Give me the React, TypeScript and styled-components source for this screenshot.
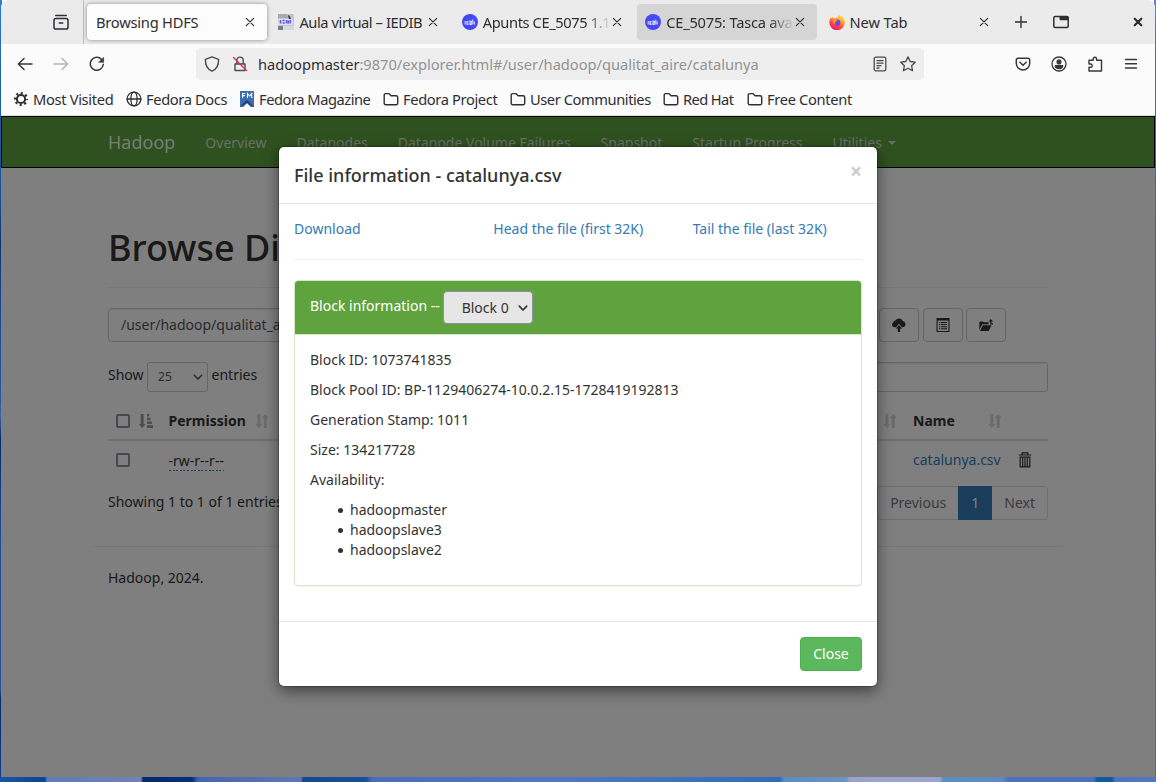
import React from 'react';
import styled, { createGlobalStyle, css } from 'styled-components';

const GlobalStyle = createGlobalStyle`
  * { box-sizing: border-box; }
  html, body { margin: 0; padding: 0; }
  body { overflow: hidden; font-family: 'Noto Sans', 'Open Sans', sans-serif; }
  p, h1, h4, ul { margin: 0; }
  svg { display: block; flex: none; }
`;

const Desktop = styled.div`
  width: 1156px;
  height: 782px;
  padding: 0 1px 5px;
  background:
    linear-gradient(90deg, #1b53a4 0, #0b4595 45px, #5f7cb4 47px, #6f83b6 141px, #02296d 143px, #052f7c 192px,
      #4465ae 198px, #6077b5 301px, #16488f 303px, #17509a 366px, #4d6cba 372px, #5277c0 560px, #2f6db8 780px,
      #5b8cc0 784px, #6d93c3 846px, #9aa3cb 850px, #9aa5cd 940px, #5a8fc0 943px, #6088c4 1003px, #4c72bd 1008px,
      #4c70bb 1094px, #125a9e 1097px, #125a9e 1112px, #4f74bb 1115px, #5577bd 1156px) 0 777px / 1156px 5px no-repeat,
    linear-gradient(180deg, #2d7bd0 0, #1d5fae 90px, #17519c 200px, #0a3573 240px, #1a4f9c 330px, #2457a6 400px,
      #4361a8 415px, #03296e 440px, #1b4d96 530px, #2552a0 690px, #03296e 700px, #0b3f8b 777px) 0 0 / 2px 777px no-repeat,
    linear-gradient(180deg, #5d83dc 0, #4d66a8 60px, #4a5f9e 300px, #2f4f98 530px, #4c64a5 600px, #4c64a5 777px) 1154px 0 / 2px 777px no-repeat;
`;

const Window = styled.div`
  width: 1154px;
  height: 777px;
  display: flex;
  flex-direction: column;
  overflow: hidden;
  border-radius: 8px 8px 0 0;
  background: #fbfbfb;
`;

/* ---------- browser chrome ---------- */

const TabBar = styled.div`
  display: flex;
  height: 44px;
  background: #ebebeb;
  color: #2e2e33;
`;

const RecentTabs = styled.div`
  width: 83px;
  padding: 14px 0 0 52px;
  border-right: 1px solid #bebebe;
`;

const TabStrip = styled.div`
  display: flex;
  gap: 3.4px;
  padding: 4px 0 4px 3px;
`;

const TabItem = styled.div<{ $state?: 'active' | 'hover' }>`
  width: 180px;
  height: 36px;
  display: flex;
  align-items: center;
  padding: 0 12px 0 9px;
  border-radius: 4px;
  ${(p) => p.$state === 'active' && css`background: #fcfcfc; box-shadow: 0 0 4px rgba(0, 0, 0, 0.42);`}
  ${(p) => p.$state === 'hover' && css`background: #d5d5d5;`}
`;

const TabLabel = styled.span<{ $fade?: boolean; $track: number }>`
  flex: 1;
  min-width: 0;
  overflow: hidden;
  white-space: nowrap;
  font-size: 14.67px;
  line-height: 22px;
  letter-spacing: ${(p) => p.$track}px;
  ${(p) => p.$fade && css`mask-image: linear-gradient(90deg, #000 calc(100% - 26px), transparent calc(100% - 1px));`}
`;

const Favicon = styled.span`
  margin-left: -1px;
  margin-right: 5px;
`;

const TabTools = styled.div`
  flex: 1;
  display: flex;
  align-items: center;
  padding: 0 12px 0 12px;
`;

const ToolGap = styled.span<{ $w?: number }>`
  ${(p) => (p.$w ? `width: ${p.$w}px;` : 'flex: 1;')}
`;

const NavToolbar = styled.div`
  display: flex;
  align-items: center;
  height: 40px;
  padding: 0 16px;
  color: #38383d;
`;

const NavButtons = styled.div`
  display: flex;
  gap: 20px;
  width: 179px;
`;

const UrlBar = styled.div`
  width: 728px;
  height: 32px;
  display: flex;
  align-items: center;
  gap: 12px;
  padding: 0 8px;
  border-radius: 4px;
  background: #eeeeee;
  color: #4a4a4f;
`;

const UrlText = styled.span`
  flex: 1;
  margin-left: -2px;
  font-size: 14.67px;
  letter-spacing: -0.015px;
  color: #939395;
  white-space: nowrap;
  b { font-weight: 400; color: #2e2e33; }
`;

const ToolbarEnd = styled.div`
  display: flex;
  flex: 1;
  justify-content: flex-end;
  gap: 20px;
`;

const BookmarkBar = styled.div`
  display: flex;
  height: 32px;
  padding: 0 0 1px 12px;
  border-bottom: 1px solid #dcdcdc;
  color: #2e2e33;
`;

const Bookmark = styled.div<{ $w: number; $track: number }>`
  display: flex;
  align-items: center;
  gap: 4px;
  width: ${(p) => p.$w}px;
  font-size: 14.67px;
  line-height: 20px;
  letter-spacing: ${(p) => p.$track}px;
  white-space: nowrap;
`;

/* ---------- page ---------- */

const Viewport = styled.div`
  position: relative;
  flex: 1;
  overflow: hidden;
  background: #fff;
  color: #333;
  font-size: 14px;
  line-height: 20px;
`;

const NavBar = styled.nav`
  height: 52px;
  padding: 0 91px;
  display: flex;
  border: 1px solid #000;
  background: #5fa33e;
`;

const Brand = styled.a`
  padding: 15px;
  font-size: 18px;
  color: #fff;
  opacity: 0.9;
`;

const NavLink = styled.a`
  display: flex;
  align-items: center;
  gap: 6px;
  height: 50px;
  padding: 2px 15px 0;
  color: #d2dccd;
  white-space: nowrap;
`;

const Caret = styled.i`
  border: 4px solid transparent;
  border-top-color: currentColor;
  border-bottom: 0;
`;

const Container = styled.main`
  width: 970px;
  margin: 0 auto;
  padding: 60px 15px 0;
`;

const PageTitle = styled.h1`
  padding-bottom: 19px;
  margin-bottom: 20px;
  border-bottom: 1px solid #eee;
  font-size: 36px;
  line-height: 40px;
  font-weight: 500;
`;

const PathRow = styled.div`
  display: flex;
  gap: 3.5px;
  padding-right: 42px;
`;

const Field = styled.div<{ $h: number; $w?: number }>`
  ${(p) => (p.$w ? `width: ${p.$w}px;` : 'flex: 1;')}
  height: ${(p) => p.$h}px;
  display: flex;
  align-items: center;
  padding: 0 12px;
  border: 1px solid #ccc;
  border-radius: ${(p) => (p.$h > 30 ? 4 : 3)}px;
  box-shadow: inset 0 1px 1px rgba(0, 0, 0, 0.075);
  color: #555;
`;

const IconButton = styled.button`
  width: 40px;
  height: 34px;
  padding: 0 12px;
  border: 1px solid #ccc;
  border-radius: 4px;
  background: #fff;
  color: #333;
`;

const LengthRow = styled.div`
  display: flex;
  align-items: flex-start;
  gap: 3.5px;
  margin-top: 20px;
  line-height: 26px;
`;

const LengthSelect = styled.div`
  width: 61px;
  height: 30px;
  display: flex;
  align-items: center;
  justify-content: space-between;
  padding: 0 4px 0 10px;
  border: 1px solid #ccc;
  border-radius: 3px;
  font-size: 12px;
  color: #555;
`;

const tableGrid = css`
  display: grid;
  grid-template-columns: 52.5px 116.5px 1fr 105px 38px;
`;

const HeadRow = styled.div`
  ${tableGrid}
  height: 43px;
  margin-top: 6px;
  border-bottom: 2px solid #ddd;
  font-weight: 700;
`;

const BodyRow = styled.div`
  ${tableGrid}
  height: 37px;
`;

const Cell = styled.div<{ $between?: boolean }>`
  display: flex;
  align-items: center;
  justify-content: ${(p) => (p.$between ? 'space-between' : 'flex-start')};
  padding: ${(p) => (p.$between ? '5px 8px 0' : '1px 8px 0')};
  a { color: #337ab7; }
`;

const CheckBox = styled.span`
  width: 14px;
  height: 14px;
  border: 2px solid #8f8f9d;
  border-radius: 2px;
`;

const Perm = styled.span`
  padding-bottom: 1px;
  margin-bottom: -1px;
  line-height: 19px;
  background: repeating-linear-gradient(90deg, #2a86b0 0 2px, transparent 2px 3.6px) 0 100% / 100% 1px no-repeat;
`;

const TableFoot = styled.div`
  display: flex;
  justify-content: space-between;
  align-items: flex-start;
  margin-top: 8px;
  padding-top: 0;
  line-height: 32px;
`;

const Pager = styled.div`
  display: flex;
  height: 34px;
  border: 1px solid #ddd;
  border-radius: 4px;
  line-height: 20px;
  color: #777;
`;

const PageItem = styled.span<{ $on?: boolean }>`
  padding: 6px 12px;
  ${(p) => p.$on && css`margin: -1px 0; padding: 7px 13px; background: #337ab7; color: #fff;`}
`;

const PageFooter = styled.footer`
  margin: 26px -15px 0;
  padding: 21px 15px;
  border-top: 1px solid #eee;
`;

/* ---------- modal ---------- */

const Backdrop = styled.div`
  position: absolute;
  inset: 0;
  background: rgba(0, 0, 0, 0.5);
  padding-top: 31px;
`;

const Modal = styled.section`
  width: 598px;
  margin: 0 auto;
  border-radius: 5px;
  background: #fff;
  box-shadow: 0 0 0 1px rgba(0, 0, 0, 0.2), 0 5px 15px rgba(0, 0, 0, 0.5);
`;

const ModalHead = styled.header`
  display: flex;
  justify-content: space-between;
  height: 57px;
  padding: 15px;
  border-bottom: 1px solid #e5e5e5;
`;

const ModalTitle = styled.h4`
  font-size: 18px;
  line-height: 26px;
  font-weight: 500;
`;

const ModalClose = styled.span`
  font-size: 21px;
  line-height: 18px;
  font-weight: 700;
  color: #ccc;
`;

const ModalBody = styled.div`
  padding: 15px 15px 35px;
`;

const LinkRow = styled.div`
  display: grid;
  grid-template-columns: repeat(3, 199.33px);
  height: 41px;
  margin-bottom: 20px;
  border-bottom: 1px solid #eee;
  color: #337ab7;
`;

const Panel = styled.div`
  border: 1px solid #d6e9c6;
  border-radius: 4px;
  overflow: hidden;
  box-shadow: 0 1px 1px rgba(0, 0, 0, 0.05);
`;

const PanelHead = styled.div`
  display: flex;
  gap: 3.4px;
  height: 54px;
  padding: 10px 15px;
  border-bottom: 1px solid #d6e9c6;
  background: #5fa33e;
  color: #fff;
  line-height: 30px;
`;

const BlockSelect = styled.span`
  display: flex;
  align-items: center;
  justify-content: space-between;
  width: 90px;
  height: 33px;
  padding: 0 4px 0 17.5px;
  border: 1px solid #8f8f9d;
  border-radius: 4px;
  background: #e6e6e6;
  color: #333;
`;

const PanelBody = styled.div`
  padding: 15px;
  p { margin-bottom: 10px; }
`;

const HostList = styled.ul`
  padding-left: 28px;
  margin-bottom: 10px;
  list-style: none;
`;

const Host = styled.li`
  display: flex;
  align-items: center;
  gap: 7px;
  &::before {
    content: '';
    width: 5px;
    height: 5px;
    margin-top: 1px;
    border-radius: 50%;
    background: #333;
  }
`;

const ModalFoot = styled.footer`
  display: flex;
  justify-content: flex-end;
  padding: 15px;
  border-top: 1px solid #e5e5e5;
`;

const CloseButton = styled.button`
  width: 62px;
  height: 34px;
  padding: 0;
  border: 1px solid #4cae4c;
  border-radius: 4px;
  background: #5cb85c;
  color: #fff;
  font: 14px/20px 'Noto Sans', sans-serif;
`;

/* ---------- icons ---------- */

type IconProps = { size?: number; children: React.ReactNode; w?: number; color?: string };
const Icon = ({ size = 16, children, w = 1.4, color = 'currentColor' }: IconProps) => (
  <svg width={size} height={size} viewBox={`0 0 ${size} ${size}`} fill="none" stroke={color} strokeWidth={w} strokeLinecap="round" strokeLinejoin="round">
    {children}
  </svg>
);

const CrossIcon = () => <Icon size={10} w={1.15}><path d="M1.3 1.3l7.4 7.4M8.7 1.3L1.3 8.7" /></Icon>;
const FolderIcon = () => <Icon w={1.4}><path d="M1.2 12.2V4.1a1.5 1.5 0 0 1 1.5-1.5h3.2l2.2 2.1h5a1.6 1.6 0 0 1 1.6 1.6v5.9a1.5 1.5 0 0 1-1.5 1.5H2.7a1.5 1.5 0 0 1-1.5-1.5z" /></Icon>;
const ChevronIcon = ({ w = 1.5 }: { w?: number }) => <Icon size={10} w={w}><path d="M1.3 3.2L5 7l3.7-3.8" /></Icon>;

const CourseIcon = () => (
  <svg width="16" height="16" viewBox="0 0 16 16">
    <circle cx="8" cy="8" r="8" fill="#4548f5" />
    <path d="M3.200 7v3.400M5 7.500h1.500M5 7v3.400h1.500M5 9h1.500M8 7v3.400h1.400V7.400zM10.800 5.600v4.800M12.300 7.600v2.800" stroke="#d9daff" strokeWidth="1.100" fill="none" />
  </svg>
);

const CampusIcon = () => (
  <svg width="16" height="16" viewBox="0 0 16 16">
    <path fill="#c3c7cf" d="M0 0h16v16H0z" />
    <path fill="#a5aab3" d="M0 0h9l2 4H0z" />
    <path fill="#3b3f4b" d="M10 1l2 1 1 3-2 1z" />
    <path fill="#dfe1f3" d="M1 5h13l1 6H0z" />
    <path d="M2.500 6v3.500M4.500 6.500h2.200M4.500 9h2.200M8.500 6v3.500M10.300 6.500v3M12.300 6v3.500" stroke="#5a55e0" strokeWidth="1.500" fill="none" />
    <path fill="#777d89" d="M0 12h5v4H0z" />
    <path fill="#d6d9de" d="M5 12h11v4H5z" />
  </svg>
);

const FirefoxIcon = () => (
  <svg width="16" height="16" viewBox="0 0 16 16">
    <defs>
      <linearGradient id="fox" x1=".8" y1="0" x2=".3" y2="1">
        <stop offset="0" stopColor="#fff14a" />
        <stop offset=".35" stopColor="#ffb02e" />
        <stop offset=".68" stopColor="#ff4a38" />
        <stop offset="1" stopColor="#ec1178" />
      </linearGradient>
    </defs>
    <path fill="url(#fox)" d="M10.3 0c.2 1.5 1 2 1.8 2.8.3.2.5-.2.5-.6 1.900 1.400 3.200 3.700 3.200 6.200A7.700 7.700 0 0 1 .3 8.500C.3 6.500 1 4.700 2.100 3.100c.1.500.2.900.4 1.200.4-.6.9-1 1.500-1.300 0 .5.2 1 .6 1.400C6.800 4.300 9 3.600 10.300 0z" />
    <circle cx="8.100" cy="8.700" r="3.300" fill="#7542e5" />
    <path fill="#ff9640" d="M4.200 6.500c1.300-1 3-.8 4 .3-.2.900-1.700.8-2.300 1.700-.4.900.3 1.900 1.400 2.300-1.800.3-3.700-1.600-3.100-4.300z" />
  </svg>
);

const MagazineIcon = () => (
  <svg width="16" height="16" viewBox="0 0 16 16">
    <path fill="#3c6eb4" d="M1 0h14v16H1z" />
    <path fill="#294172" d="M1 16l5-5.500L8 9l2 1.500 5 5.500-3-1.300L8 11.800l-4 2.900z" />
    <path fill="#fbfbfb" d="M4.200 16L8 12.300l3.800 3.700z" />
    <path d="M3.500 7V2.500H6.200M3.500 4.600H6M8.500 7V2.500L10.600 5l2.100-2.500V7" stroke="#fff" strokeWidth="1.100" fill="none" />
  </svg>
);

const SortIcon = () => (
  <svg width="14" height="14" viewBox="0 0 14 14" fill="#333" opacity=".2">
    <path d="M2.400 0h3v10h2L3.900 14 .4 10h2zM8.700 14V4h-2l3.500-4 3.500 4h-2v10z" />
  </svg>
);

const SortedIcon = () => (
  <svg width="14" height="14" viewBox="0 0 14 14" fill="#333" opacity=".5">
    <path d="M1.700 0h2.900v10h2L3.200 14-.2 10h1.900zM8 0h2.200v2.600H8zM8 3.700h3.400v2.600H8zM8 7.500h4.800v2.600H8zM8 11.300h6v2.600H8z" />
  </svg>
);

const UploadIcon = () => (
  <svg width="14" height="14" viewBox="0 0 14 14" fill="currentColor">
    <path d="M4 9.300H2.400A2.500 2.500 0 0 1 1.300 4.600 2.200 2.200 0 0 1 3.500 2.500 4 4 0 0 1 10.800 3.100 3.200 3.200 0 0 1 11.300 9.300H10L7 5.700z" />
    <path d="M7 6.900l3.200 3.600H8.200V14H5.800v-3.500H3.800z" />
  </svg>
);

const ListIcon = () => (
  <svg width="14" height="14" viewBox="0 0 14 14" fill="currentColor">
    <path fillRule="evenodd" d="M.5 0h13v14H.5zM1.600 2.500V12.900H12.400V2.500z" />
    <path d="M3 4h1.200v1H3zM5 4h6v1H5zM3 6.100h1.200v1H3zM5 6.100h6v1H5zM3 8.200h1.200v1H3zM5 8.200h6v1H5zM3 10.300h1.200v1H3zM5 10.300h6v1H5z" />
  </svg>
);

const FolderUpIcon = () => (
  <svg width="15" height="14" viewBox="0 0 15 14" fill="currentColor">
    <path d="M.3 12V4.500l.8-1H4l.8.8h4.700v1.900H3.300zM3.800 7.200h8.700L9.700 13H1z" />
    <path d="M11.800 1l2.200 2.400h-1.500V5.200H14v1.300h-2.800V3.400H9.700z" />
  </svg>
);

const TrashIcon = () => (
  <svg width="14" height="16" viewBox="0 0 14 16" fill="none" stroke="#333" strokeWidth="1.200">
    <path d="M.7 3h12.600M4.200 2.800V.9h5.600v1.900M2.200 5.200h9.600V14.900H2.200zM4.700 6v8.500M7 6v8.500M9.300 6v8.500" />
  </svg>
);

const tabs: { title: string; track: number; icon?: React.ReactNode; fade?: boolean; state?: 'active' | 'hover' }[] = [
  { title: 'Browsing HDFS', track: -0.22, state: 'active' },
  { title: 'Aula virtual – IEDIB', track: -0.42, icon: <CampusIcon /> },
  { title: 'Apunts CE_5075 1.1', track: -0.4, icon: <CourseIcon />, fade: true },
  { title: 'CE_5075: Tasca ava', track: -0.22, icon: <CourseIcon />, fade: true, state: 'hover' },
  { title: 'New Tab', track: -0.1, icon: <FirefoxIcon /> },
];

const GearIcon = () => (
  <svg width="16" height="16" viewBox="0 0 16 16" fill="none" stroke="currentColor">
    <circle cx="8" cy="8" r="4.100" strokeWidth="2" />
    <circle cx="8" cy="8" r="6" strokeWidth="2.200" strokeDasharray="2.100 2.612" strokeDashoffset="1" />
  </svg>
);

const GlobeIcon = () => <Icon w={1.300}><circle cx="8" cy="8" r="6.900" /><ellipse cx="8" cy="8" rx="3.100" ry="6.900" /><path d="M1.100 8h13.800" /></Icon>;

const folders: [string, number, number][] = [
  ['Fedora Project', 127, -0.36],
  ['User Communities', 153, -0.43],
  ['Red Hat', 84, -0.6],
  ['Free Content', 120, -0.33],
];
const navItems = ['Overview', 'Datanodes', 'Datanode Volume Failures', 'Snapshot', 'Startup Progress'];

export default function App() {
  return (
    <Desktop>
      <GlobalStyle />
      <Window>
        <TabBar>
          <RecentTabs>
            <Icon w={1.5}><rect x="1" y="4.600" width="14" height="10.400" rx="1.800" /><path d="M2.800 1.500h10.400M6.300 9h3.400" /></Icon>
          </RecentTabs>
          <TabStrip>
            {tabs.map((t) => (
              <TabItem key={t.title} $state={t.state}>
                {t.icon && <Favicon>{t.icon}</Favicon>}
                <TabLabel $fade={t.fade} $track={t.track}>{t.title}</TabLabel>
                <CrossIcon />
              </TabItem>
            ))}
          </TabStrip>
          <TabTools>
            <Icon size={16} w={1.400}><path d="M8 2.500v11M2.500 8h11" /></Icon>
            <ToolGap $w={24} />
            <Icon w={1.500}><rect x=".8" y="2.600" width="14.400" height="11" rx="1.500" /><path fill="currentColor" d="M7.300 3h7.500v2.600H7.300z" /></Icon>
            <ToolGap />
            <Icon size={10} w={2.200}><path d="M1.700 1.700l6.600 6.600M8.300 1.700L1.700 8.300" /></Icon>
          </TabTools>
        </TabBar>

        <NavToolbar>
          <NavButtons>
            <Icon w={1.500}><path d="M15 8H1.300M7 2.500L1.300 8 7 13.500" /></Icon>
            <Icon w={1.500} color="#b4b4b6"><path d="M1 8h13.700M9 2.500L14.700 8 9 13.500" /></Icon>
            <Icon w={1.500}><path d="M14.300 8.300A6.500 6.500 0 1 1 12.600 3.400" /><path fill="currentColor" d="M14.600 1.500v4.800H9.800z" strokeWidth=".6" /></Icon>
          </NavButtons>
          <UrlBar>
            <Icon w={1.400}><path d="M8 .9l6.600 2.500c.2 5.600-2.200 9.800-6.600 11.700C3.600 13.200 1.200 9 1.400 3.400z" /></Icon>
            <Icon w={1.400}><path d="M3 8h10v6.500H3zM4.800 8V4.300a3.200 3.200 0 0 1 6.400 0V8" /><path stroke="#e22850" d="M1.500 1.500l13 13" /></Icon>
            <UrlText><b>hadoopmaster</b>:9870/explorer.html#/user/hadoop/qualitat_aire/catalunya</UrlText>
            <Icon w={1.300}><rect x="2.200" y="1.200" width="11.600" height="13.600" rx="1.600" /><path d="M5 4.700h6M5 7.200h6M5 9.700h4M5 12h2" /></Icon>
            <Icon w={1.300}><path d="M8 .9l2.200 4.600 5 .7-3.600 3.500.9 5L8 12.300l-4.500 2.400.9-5L.8 6.200l5-.7z" /></Icon>
          </UrlBar>
          <ToolbarEnd>
            <Icon w={1.500}><path d="M3 2.300h10a1.700 1.700 0 0 1 1.700 1.700v3.300a6.700 6.700 0 0 1-13.400 0V4A1.700 1.700 0 0 1 3 2.300zM4.800 6.300L8 9.300l3.200-3" /></Icon>
            <Icon w={1.300}><circle cx="8" cy="8" r="7" /><circle cx="8" cy="5.900" r="1.900" fill="currentColor" /><path fill="currentColor" d="M4.300 9.700h7.400c0 1.700-1.700 2.800-3.700 2.800s-3.700-1.100-3.700-2.800z" /></Icon>
            <Icon w={1.400}><path d="M2 15V11.300h1.600a1.600 1.600 0 0 0 0-3.300H2V4.300h4.200V3a1.700 1.700 0 0 1 3.400 0v1.300h4.900V15z" /></Icon>
            <Icon w={1.400}><path d="M2.500 3.500h11M2.500 7.800h11M2.500 12h11" /></Icon>
          </ToolbarEnd>
        </NavToolbar>

        <BookmarkBar>
          <Bookmark $w={113} $track={-0.32}><GearIcon />Most Visited</Bookmark>
          <Bookmark $w={113} $track={-0.36}><GlobeIcon />Fedora Docs</Bookmark>
          <Bookmark $w={144} $track={-0.46}><MagazineIcon />Fedora Magazine</Bookmark>
          {folders.map(([name, w, track]) => (
            <Bookmark key={name} $w={w} $track={track}><FolderIcon />{name}</Bookmark>
          ))}
        </BookmarkBar>

        <Viewport>
          <NavBar>
            <Brand>Hadoop</Brand>
            {navItems.map((n) => <NavLink key={n}>{n}</NavLink>)}
            <NavLink>Utilities<Caret /></NavLink>
          </NavBar>
          <Container>
            <PageTitle>Browse Directory</PageTitle>
            <PathRow>
              <Field $h={34}>/user/hadoop/qualitat_aire/catalunya</Field>
              <IconButton><UploadIcon /></IconButton>
              <IconButton><ListIcon /></IconButton>
              <IconButton><FolderUpIcon /></IconButton>
            </PathRow>
            <LengthRow>
              Show
              <LengthSelect>25<ChevronIcon /></LengthSelect>
              entries
              <ToolGap />
              <Field $h={30} $w={230} />
            </LengthRow>
            <HeadRow>
              <Cell $between><CheckBox /><SortedIcon /></Cell>
              <Cell $between>Permission<SortIcon /></Cell>
              <Cell $between><span /><SortIcon /></Cell>
              <Cell $between>Name<SortIcon /></Cell>
            </HeadRow>
            <BodyRow>
              <Cell><CheckBox /></Cell>
              <Cell><Perm>-rw-r--r--</Perm></Cell>
              <Cell />
              <Cell><a>catalunya.csv</a></Cell>
              <Cell><TrashIcon /></Cell>
            </BodyRow>
            <TableFoot>
              Showing 1 to 1 of 1 entries
              <Pager>
                <PageItem>Previous</PageItem>
                <PageItem $on>1</PageItem>
                <PageItem>Next</PageItem>
              </Pager>
            </TableFoot>
            <PageFooter>Hadoop, 2024.</PageFooter>
          </Container>

          <Backdrop>
            <Modal>
              <ModalHead>
                <ModalTitle>File information - catalunya.csv</ModalTitle>
                <ModalClose>×</ModalClose>
              </ModalHead>
              <ModalBody>
                <LinkRow>
                  <a>Download</a>
                  <a>Head the file (first 32K)</a>
                  <a>Tail the file (last 32K)</a>
                </LinkRow>
                <Panel>
                  <PanelHead>
                    Block information --
                    <BlockSelect>Block 0<ChevronIcon w={1.700} /></BlockSelect>
                  </PanelHead>
                  <PanelBody>
                    <p>Block ID: 1073741835</p>
                    <p>Block Pool ID: BP-1129406274-10.0.2.15-1728419192813</p>
                    <p>Generation Stamp: 1011</p>
                    <p>Size: 134217728</p>
                    <p>Availability:</p>
                    <HostList>
                      <Host>hadoopmaster</Host>
                      <Host>hadoopslave3</Host>
                      <Host>hadoopslave2</Host>
                    </HostList>
                  </PanelBody>
                </Panel>
              </ModalBody>
              <ModalFoot>
                <CloseButton>Close</CloseButton>
              </ModalFoot>
            </Modal>
          </Backdrop>
        </Viewport>
      </Window>
    </Desktop>
  );
}
